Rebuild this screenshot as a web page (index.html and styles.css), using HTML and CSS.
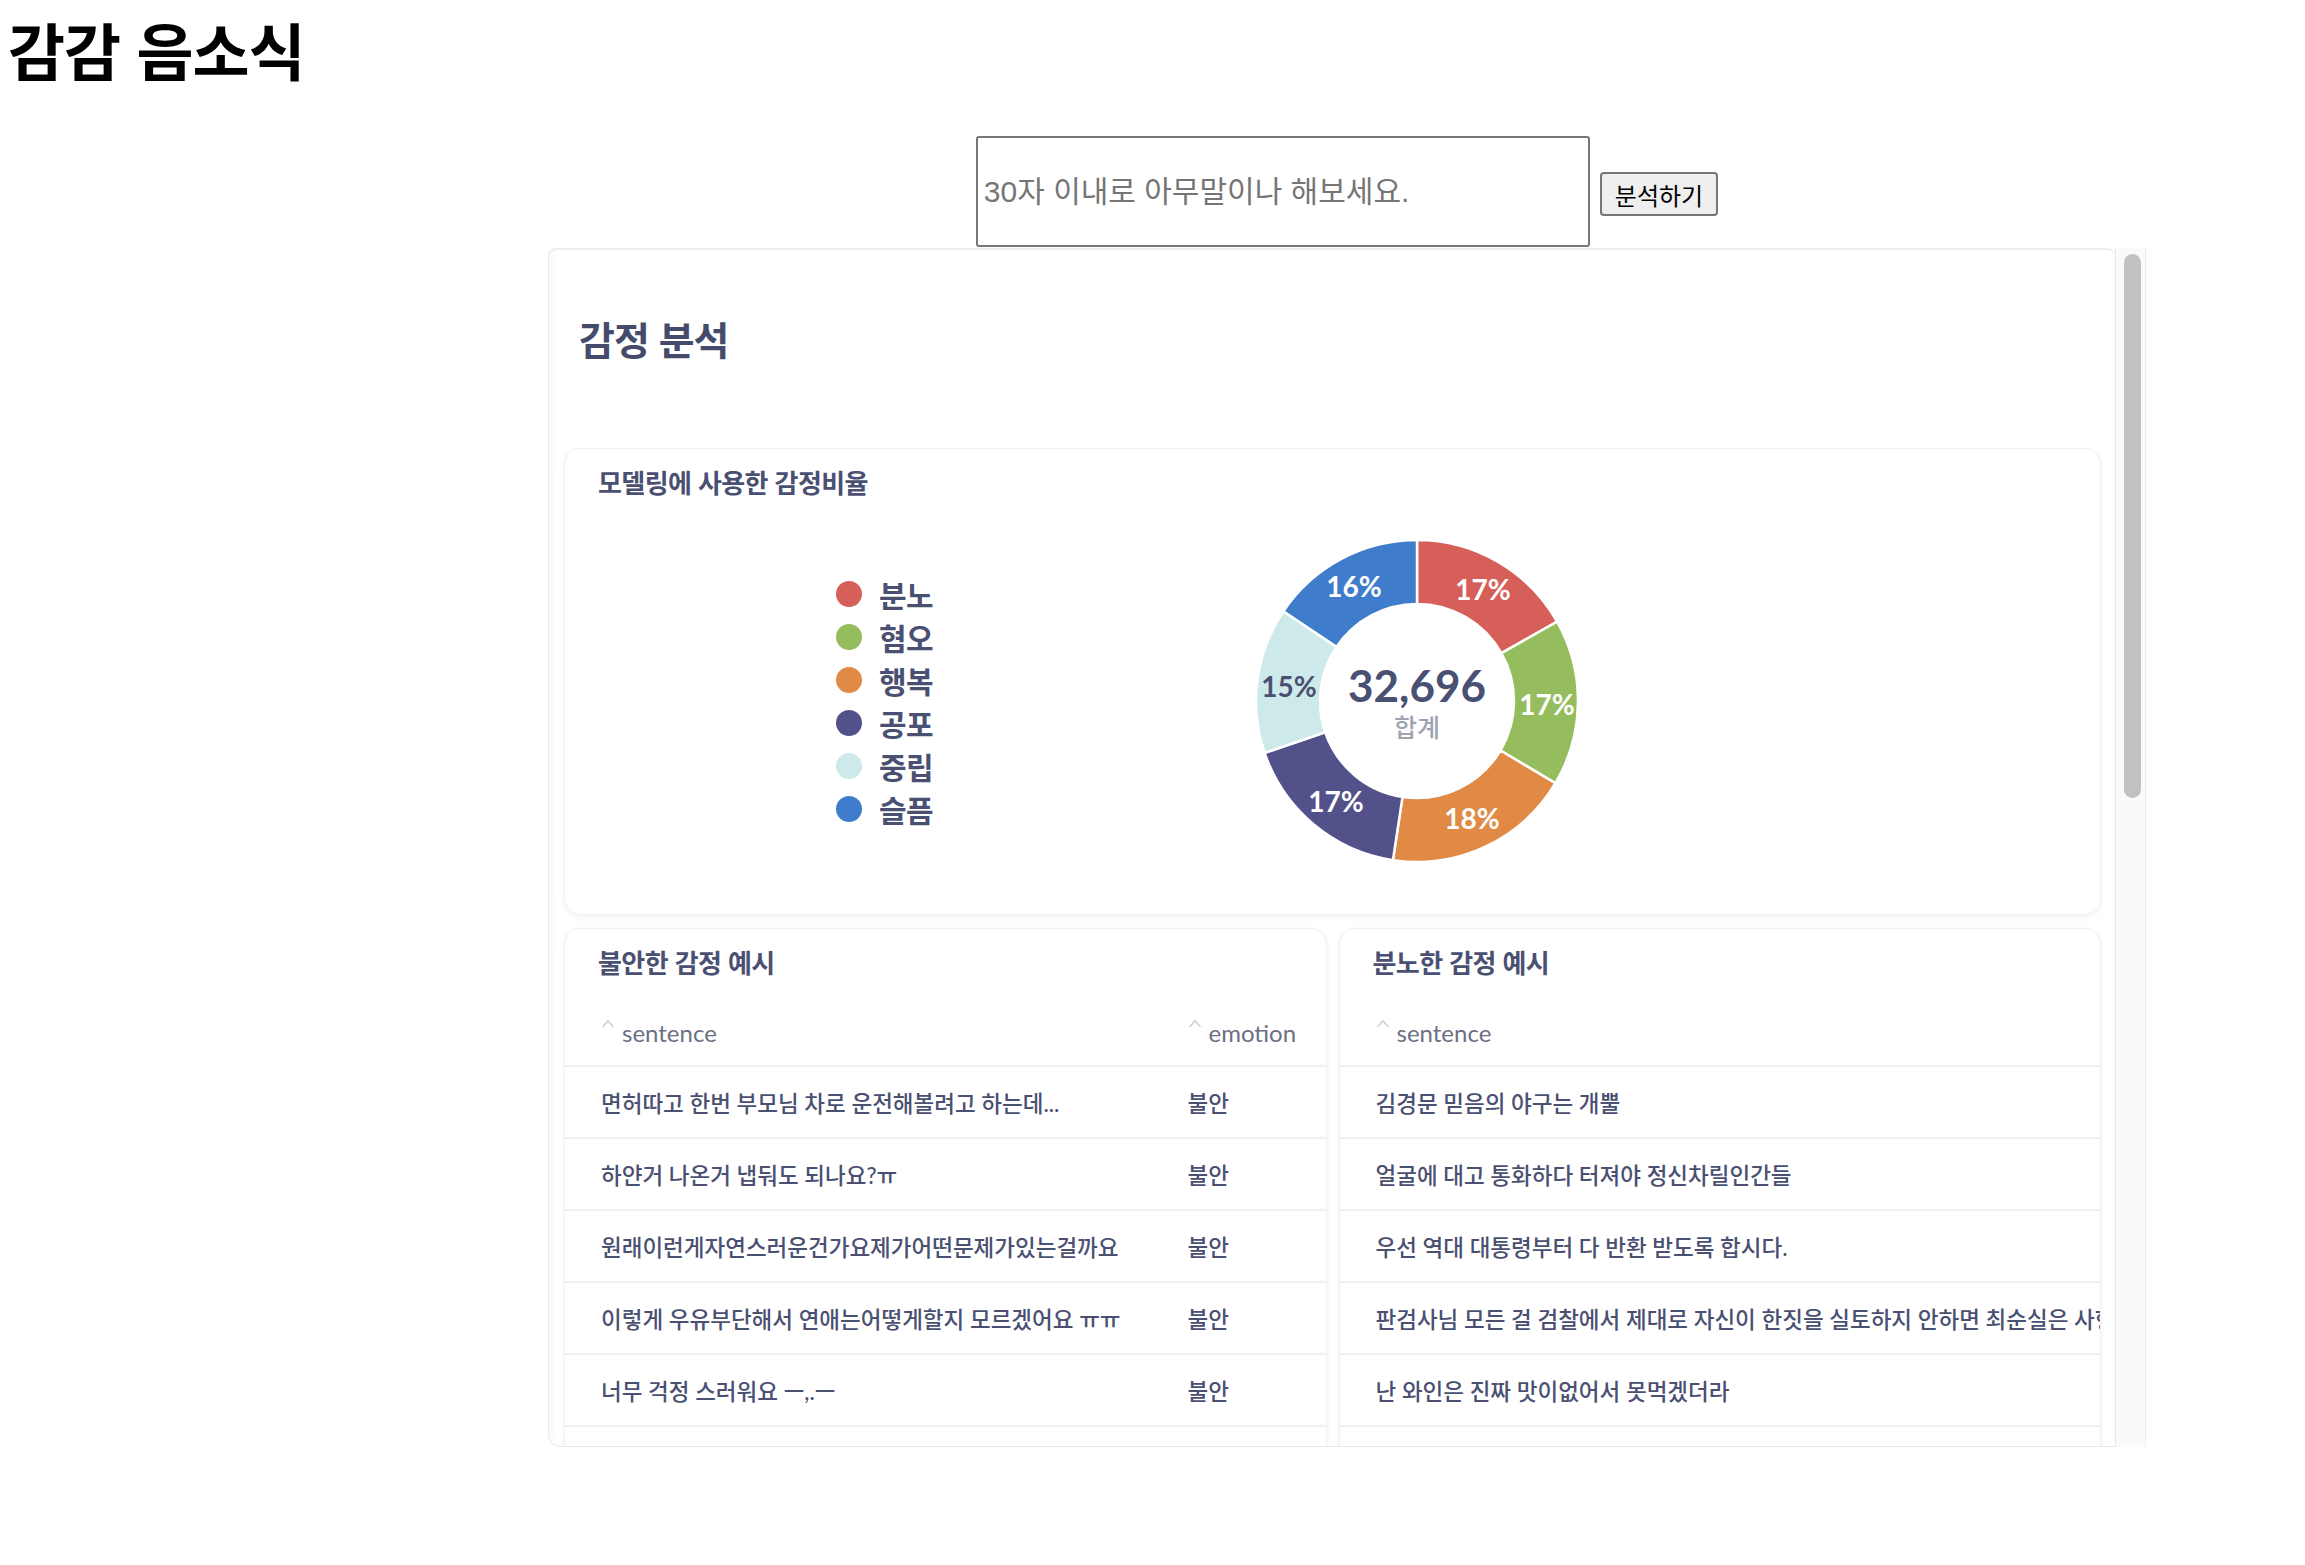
FILE: index.html
```html
<!DOCTYPE html>
<html lang="ko">
<head>
<meta charset="utf-8">
<title>감감 음소식</title>
<link rel="stylesheet" href="styles.css">
</head>
<body>
<h1 class="app-title">감감 음소식</h1>
<main class="app">
  <form class="ask">
    <input class="ask-input" type="text" placeholder="30자 이내로 아무말이나 해보세요.">
    <button class="ask-btn" type="button">분석하기</button>
  </form>
  <div class="frame">
    <div class="report">
      <h2 class="report-title">감정 분석</h2>
      <section class="card chart-card">
        <h3 class="card-title">모델링에 사용한 감정비율</h3>
        <div class="chart-body">
          <ul class="legend">
            <li class="legend-item"><span class="dot dot-anger"></span>분노</li>
            <li class="legend-item"><span class="dot dot-disgust"></span>혐오</li>
            <li class="legend-item"><span class="dot dot-joy"></span>행복</li>
            <li class="legend-item"><span class="dot dot-fear"></span>공포</li>
            <li class="legend-item"><span class="dot dot-neutral"></span>중립</li>
            <li class="legend-item"><span class="dot dot-sad"></span>슬픔</li>
          </ul>
          <svg class="donut" viewBox="0 0 324 324" width="324" height="324">
            <g class="slices">
              <path class="s-anger" d="M162 1 A161 161 0 0 1 302.1 82.7 L246.4 114.2 A97 97 0 0 0 162 65 Z"/>
              <path class="s-disgust" d="M302.1 82.7 A161 161 0 0 1 300.4 244.2 L245.4 211.5 A97 97 0 0 0 246.4 114.2 Z"/>
              <path class="s-joy" d="M300.4 244.2 A161 161 0 0 1 137.9 321.2 L147.5 257.9 A97 97 0 0 0 245.4 211.5 Z"/>
              <path class="s-fear" d="M137.9 321.2 A161 161 0 0 1 9.6 213.9 L70.2 193.3 A97 97 0 0 0 147.5 257.9 Z"/>
              <path class="s-neutral" d="M9.6 213.9 A161 161 0 0 1 28.4 72.2 L81.5 107.9 A97 97 0 0 0 70.2 193.3 Z"/>
              <path class="s-sad" d="M28.4 72.2 A161 161 0 0 1 162 1 L162 65 A97 97 0 0 0 81.5 107.9 Z"/>
            </g>
            <g class="pct">
              <text x="228" y="50">17%</text>
              <text x="292" y="165">17%</text>
              <text x="217" y="279">18%</text>
              <text x="81" y="262">17%</text>
              <text class="pct-dark" x="34" y="147">15%</text>
              <text x="99" y="47">16%</text>
            </g>
            <text class="total" x="162" y="163">32,696</text>
            <text class="total-label" x="162" y="198">합계</text>
          </svg>
        </div>
      </section>
      <div class="examples">
        <section class="card table-card">
          <h3 class="card-title">불안한 감정 예시</h3>
          <table class="data">
            <thead>
              <tr>
                <th><span class="th-inner"><svg class="sort" width="14" height="9" viewBox="0 0 14 9"><polyline points="1.5,8 7,2 12.5,8"/></svg>sentence</span></th>
                <th class="col-emotion"><span class="th-inner"><svg class="sort" width="14" height="9" viewBox="0 0 14 9"><polyline points="1.5,8 7,2 12.5,8"/></svg>emotion</span></th>
              </tr>
            </thead>
            <tbody>
              <tr><td>면허따고 한번 부모님 차로 운전해볼려고 하는데...</td><td>불안</td></tr>
              <tr><td>하얀거 나온거 냅둬도 되나요?ㅠ</td><td>불안</td></tr>
              <tr><td>원래이런게자연스러운건가요제가어떤문제가있는걸까요</td><td>불안</td></tr>
              <tr><td>이렇게 우유부단해서 연애는어떻게할지 모르겠어요 ㅠㅠ</td><td>불안</td></tr>
              <tr><td>너무 걱정 스러워요 ㅡ,.ㅡ</td><td>불안</td></tr>
              <tr><td>&nbsp;</td><td>&nbsp;</td></tr>
            </tbody>
          </table>
        </section>
        <section class="card table-card">
          <h3 class="card-title">분노한 감정 예시</h3>
          <table class="data">
            <thead>
              <tr>
                <th><span class="th-inner"><svg class="sort" width="14" height="9" viewBox="0 0 14 9"><polyline points="1.5,8 7,2 12.5,8"/></svg>sentence</span></th>
              </tr>
            </thead>
            <tbody>
              <tr><td>김경문 믿음의 야구는 개뿔</td></tr>
              <tr><td>얼굴에 대고 통화하다 터져야 정신차릴인간들</td></tr>
              <tr><td>우선 역대 대통령부터 다 반환 받도록 합시다.</td></tr>
              <tr><td>판검사님 모든 걸 검찰에서 제대로 자신이 한짓을 실토하지 안하면 최순실은 사형</td></tr>
              <tr><td>난 와인은 진짜 맛이없어서 못먹겠더라</td></tr>
              <tr><td>&nbsp;</td></tr>
            </tbody>
          </table>
        </section>
      </div>
    </div>
    <div class="scrollbar"><div class="thumb"></div></div>
  </div>
</main>
</body>
</html>
```

FILE: styles.css
```css
* { box-sizing: border-box; }

html, body {
  margin: 0;
  background: #fff;
}

body {
  font-family: "Liberation Sans", "Noto Sans CJK KR", sans-serif;
  color: #000;
}

.app-title {
  margin: 10px 0 0 8px;
  font-family: "Noto Sans CJK KR", sans-serif;
  font-size: 62px;
  line-height: 78px;
  font-weight: 700;
  letter-spacing: -1px;
}

.app {
  width: 1598px;
  margin: 48px 0 0 548px;
}

.ask {
  display: flex;
  justify-content: center;
  align-items: center;
  gap: 10px;
  margin: 0;
}

.ask-input {
  width: 614px;
  height: 111px;
  border: 2px solid #777;
  border-radius: 3px;
  padding: 0 6px;
  font: 30px "Liberation Sans", "Noto Sans CJK KR", sans-serif;
  color: #000;
  background: #fff;
}

.ask-input::placeholder { color: #757575; }

.ask-btn {
  height: 44px;
  margin-top: 5px;
  padding: 0 13px;
  font: 24px "Liberation Sans", "Noto Sans CJK KR", sans-serif;
  color: #000;
  background: #efefef;
  border: 2px solid #767676;
  border-radius: 4px;
}

.frame {
  display: flex;
  height: 1199px;
  margin-top: 1px;
}

.report {
  flex: 1;
  min-width: 0;
  overflow: hidden;
  padding: 63px 14px 0 15px;
  border: 1px solid #e8e8e8;
  border-top: 2px solid #ececec;
  border-right: 0;
  border-radius: 8px 8px 0 12px;
  box-shadow: inset 6px 0 8px -6px rgba(0, 0, 0, 0.06);
  font-family: Lato, "Noto Sans CJK KR", sans-serif;
  color: #4a5072;
}

.report-title {
  margin: 0 0 85px 15px;
  font-family: "Noto Sans CJK KR", sans-serif;
  font-size: 39px;
  line-height: 50px;
  font-weight: 700;
  letter-spacing: -1px;
  color: #454c6b;
}

.card {
  background: #fff;
  border: 1px solid #f0f0f2;
  border-radius: 16px;
  box-shadow: 0 2px 6px rgba(0, 0, 0, 0.05);
}

.card-title {
  margin: 0;
  font-family: "Noto Sans CJK KR", sans-serif;
  font-size: 26px;
  line-height: 32px;
  font-weight: 600;
  letter-spacing: -0.6px;
  color: #4a5072;
}

.chart-card { padding: 17px 33px 51px; }

.chart-body {
  display: flex;
  align-items: center;
  margin-top: 41px;
}

.legend {
  list-style: none;
  margin: 0 0 0 238px;
  padding: 0;
}

.legend-item {
  display: flex;
  align-items: center;
  gap: 17px;
  height: 43px;
  font-family: "Noto Sans CJK KR", sans-serif;
  font-size: 30px;
  font-weight: 600;
  letter-spacing: -0.5px;
  color: #4a5072;
}

.dot {
  width: 26px;
  height: 26px;
  border-radius: 50%;
}

.dot-anger   { background: #d65f59; }
.dot-disgust { background: #95bd5e; }
.dot-joy     { background: #e08a46; }
.dot-fear    { background: #52518a; }
.dot-neutral { background: #cee9ea; }
.dot-sad     { background: #3f7dcc; }

.donut {
  display: block;
  margin-left: 322px;
  overflow: visible;
}

.slices path {
  stroke: #fff;
  stroke-width: 2.5;
  stroke-linejoin: miter;
}

.s-anger   { fill: #d65f59; }
.s-disgust { fill: #95bd5e; }
.s-joy     { fill: #e08a46; }
.s-fear    { fill: #52518a; }
.s-neutral { fill: #cee9ea; }
.s-sad     { fill: #3f7dcc; }

.pct text {
  font-family: Lato, sans-serif;
  font-size: 28px;
  font-weight: 700;
  fill: #fff;
  text-anchor: middle;
  dominant-baseline: central;
}

.pct .pct-dark { fill: #4a5072; }

.total {
  font-family: Lato, sans-serif;
  font-size: 44px;
  font-weight: 700;
  fill: #4a5072;
  text-anchor: middle;
}

.total-label {
  font-family: "Noto Sans CJK KR", sans-serif;
  font-size: 25px;
  font-weight: 500;
  fill: #9ea3b2;
  text-anchor: middle;
}

.examples {
  display: grid;
  grid-template-columns: 1fr 1fr;
  gap: 12px;
  margin-top: 13px;
}

.table-card {
  padding-top: 17px;
  overflow: hidden;
  border-bottom-left-radius: 0;
  border-bottom-right-radius: 0;
}

.table-card .card-title { margin-left: 33px; }

.data {
  width: 100%;
  margin-top: 20px;
  border-collapse: separate;
  border-spacing: 0;
  white-space: nowrap;
}

.data th,
.data td {
  box-sizing: content-box;
  text-align: left;
  border-bottom: 2px solid #f1f1f3;
}

.data th {
  height: 55px;
  padding: 0 0 12px 36px;
  font-size: 24px;
  font-weight: 400;
  color: #6b7082;
  vertical-align: middle;
}

.data td {
  height: 70px;
  padding: 0 0 0 36px;
  font-size: 22.5px;
  font-weight: 500;
  letter-spacing: 0;
  color: #4a5072;
  vertical-align: middle;
}

.data .col-emotion { width: 138px; }

.th-inner {
  display: inline-flex;
  align-items: flex-start;
  gap: 7px;
  line-height: 29px;
}

.sort {
  margin-top: 1px;
  fill: none;
  stroke: #cfd0d6;
  stroke-width: 1.6;
}

.scrollbar {
  width: 31px;
  flex: none;
  background: #fafafa;
  border-left: 1px solid #e8e8e8;
  border-right: 1px solid #ececec;
}

.thumb {
  height: 544px;
  margin: 6px 4px 0 8px;
  background: #c1c1c1;
  border-radius: 9px;
}
```
